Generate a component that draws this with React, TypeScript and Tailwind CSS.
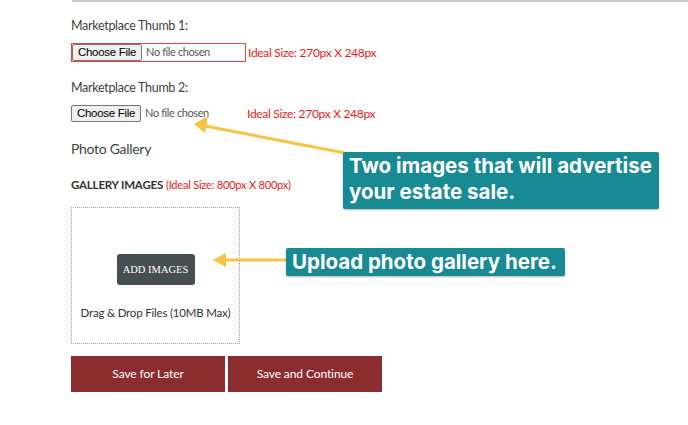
import React from "react";

const FileInput = ({ bordered }: { bordered?: boolean }) => (
  <div
    className={`flex items-center h-[19px] w-[175px] ${
      bordered ? "border border-[#f04040]" : ""
    }`}
  >
    <div className="h-[17px] px-[5px] flex items-center bg-[#efefef] border border-[#767676] rounded-[2px] text-[11.5px] tracking-[-0.3px] text-black leading-none font-['Liberation_Sans',sans-serif] whitespace-nowrap">
      Choose File
    </div>
    <span className="ml-[4px] text-[11px] tracking-[-0.4px] text-[#555] font-['Lato',sans-serif] whitespace-nowrap">
      No file chosen
    </span>
  </div>
);

export default function App() {
  return (
    <div className="relative w-[688px] h-[425px] bg-white overflow-hidden font-['Lato',sans-serif] text-[#3f3f3f]">
      <div className="ml-[72px] h-[2px] bg-[#c8c8c8]" />
      <div className="pl-[71px] pt-[15px] flex flex-col">
        <div className="text-[12.5px] tracking-[-0.3px] leading-[18px]">Marketplace Thumb 1:</div>
        <div className="mt-[8px] flex items-center">
          <FileInput bordered />
          <span className="ml-[2px] text-[12px] tracking-[-0.3px] text-[#f01818] whitespace-nowrap">
            Ideal Size: 270px X 248px
          </span>
        </div>
        <div className="mt-[17px] text-[12.5px] tracking-[-0.3px] leading-[18px]">Marketplace Thumb 2:</div>
        <div className="mt-[7px] flex items-center">
          <FileInput />
          <span className="ml-[1px] text-[12px] tracking-[-0.3px] text-[#f01818] whitespace-nowrap">
            Ideal Size: 270px X 248px
          </span>
        </div>
        <div className="mt-[16px] text-[14px] tracking-[-0.3px] leading-[20px]">Photo Gallery</div>
        <div className="mt-[17px] text-[11px] leading-[18px] whitespace-nowrap">
          <span className="font-bold text-[#333] text-[11.5px] tracking-[-0.2px]">GALLERY IMAGES</span>{" "}
          <span className="text-[#f01818] tracking-[-0.2px]">(Ideal Size: 800px X 800px)</span>
        </div>
        <div className="mt-[13px] w-[169px] h-[137px] border border-dotted border-[#a096d8] flex flex-col items-center">
          <div className="mt-[46px] w-[78px] h-[31px] rounded-[3px] bg-[#454f50] text-white text-[10.5px] flex items-center justify-center font-['Liberation_Serif',serif] whitespace-nowrap">
            ADD IMAGES
          </div>
          <div className="mt-[19px] text-[11.5px] tracking-[-0.2px] text-[#333] whitespace-nowrap">
            Drag &amp; Drop Files (10MB Max)
          </div>
        </div>
        <div className="mt-[12px] flex gap-[3px]">
          <div className="w-[154px] h-[36px] bg-[#8b2c2e] text-white text-[12px] tracking-[-0.1px] flex items-center justify-center">
            Save for Later
          </div>
          <div className="w-[154px] h-[36px] bg-[#8b2c2e] text-white text-[12px] tracking-[-0.1px] flex items-center justify-center">
            Save and Continue
          </div>
        </div>
      </div>

      <svg className="absolute left-0 top-0" width="688" height="425">
        <line x1="345" y1="153" x2="205" y2="126" stroke="#f6c342" strokeWidth="3" />
        <polygon points="194,124 208,116 205,133" fill="#f6c342" />
        <line x1="287" y1="260" x2="224" y2="260" stroke="#f6c342" strokeWidth="3" />
        <polygon points="213,260 226,253 226,267" fill="#f6c342" />
      </svg>

      <div className="absolute left-[343px] top-[152px] w-[316px] h-[57px] bg-[#178a94] rounded-[2px] shadow-[0_1px_2px_rgba(0,0,0,0.3)] px-[6px] pt-[1px] text-white font-bold text-[20.5px] leading-[26px] whitespace-nowrap font-['Inter',sans-serif]">
        Two images that will advertise
        <br />
        your estate sale.
      </div>
      <div className="absolute left-[286px] top-[248px] w-[279px] h-[28px] bg-[#178a94] rounded-[2px] shadow-[0_1px_2px_rgba(0,0,0,0.3)] px-[6px] text-white font-bold text-[20.5px] leading-[27px] whitespace-nowrap font-['Inter',sans-serif]">
        Upload photo gallery here.
      </div>
    </div>
  );
}
